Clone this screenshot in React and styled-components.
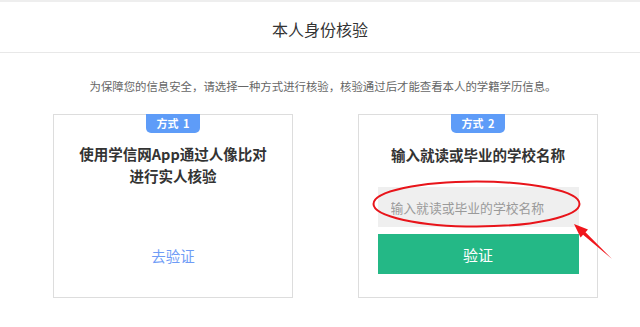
import React from "react";
import styled, { createGlobalStyle } from "styled-components";

const Global = createGlobalStyle`
  html, body { margin: 0; padding: 0; background: #fff; }
  body { font-family: "Noto Sans CJK SC", "Noto Sans", sans-serif; color: #333; }
  * { box-sizing: border-box; }
`;

const Page = styled.div`
  width: 640px;
  border-top: 2px solid #eeeeee;
`;

const Header = styled.header`
  padding: 17px 0 13px;
  line-height: 20px;
  font-size: 16px;
  color: #333;
  text-align: center;
  border-bottom: 1px solid #e8e8e8;
`;

const Notice = styled.p`
  margin: 24px 0 0;
  padding-left: 6px;
  font-size: 11.4px;
  line-height: 18px;
  color: #666;
  text-align: center;
`;

const Row = styled.div`
  display: flex;
  justify-content: center;
  gap: 65px;
  padding-left: 11px;
  margin-top: 19px;
`;

const Card = styled.section`
  position: relative;
  width: 240px;
  height: 184px;
  border: 1px solid #dddddd;
  display: flex;
  flex-direction: column;
  align-items: center;
`;

const Badge = styled.div`
  margin-top: -1px;
  width: 54px;
  height: 19px;
  border-radius: 0 0 5px 5px;
  background: #5e9cf8;
  color: #fff;
  font-size: 11px;
  font-weight: 700;
  line-height: 19px;
  text-align: center;
  word-spacing: 2px;
`;

const Title = styled.h3`
  margin: ${(p) => p.$mt}px 0 0;
  font-size: 14.5px;
  font-weight: 700;
  line-height: 22px;
  color: #333;
  text-align: center;
`;

const Link = styled.a`
  margin-top: 58px;
  font-size: 14.5px;
  line-height: 22px;
  color: #6f9cf6;
  text-decoration: none;
  cursor: pointer;
`;

const Input = styled.input`
  margin-top: 21px;
  width: 201px;
  height: 40px;
  border: none;
  outline: none;
  background: #efefef;
  padding: 0 0 0 13px;
  font-family: inherit;
  font-size: 12.8px;
  color: #333;
  &::placeholder { color: #9a9a9a; }
`;

const Button = styled.button`
  margin-top: 7px;
  width: 201px;
  height: 40px;
  border: none;
  background: #24b886;
  color: #fff;
  font-family: inherit;
  font-size: 15px;
  cursor: pointer;
`;

const Markup = styled.svg`
  position: absolute;
  left: -1px;
  top: -1px;
  width: 280px;
  height: 200px;
  overflow: visible;
  pointer-events: none;
`;

export default function App() {
  return (
    <>
      <Global />
      <Page>
        <Header>本人身份核验</Header>
        <Notice>为保障您的信息安全，请选择一种方式进行核验，核验通过后才能查看本人的学籍学历信息。</Notice>
        <Row>
          <Card>
            <Badge>方式 1</Badge>
            <Title $mt={10}>
              使用学信网App通过人像比对
              <br />
              进行实人核验
            </Title>
            <Link>去验证</Link>
          </Card>
          <Card>
            <Badge>方式 2</Badge>
            <Title $mt={11}>输入就读或毕业的学校名称</Title>
            <Input placeholder="输入就读或毕业的学校名称" />
            <Button>验证</Button>
            <Markup viewBox="358 114 280 200">
              <ellipse cx="476.5" cy="204" rx="103" ry="22.5" fill="none" stroke="#e8141a" strokeWidth="2" />
              <polygon
                points="574,224 588,229.5 585.5,232.2 612,259 583.1,234.8 580.6,237.5"
                fill="#f0161c"
              />
            </Markup>
          </Card>
        </Row>
      </Page>
    </>
  );
}
